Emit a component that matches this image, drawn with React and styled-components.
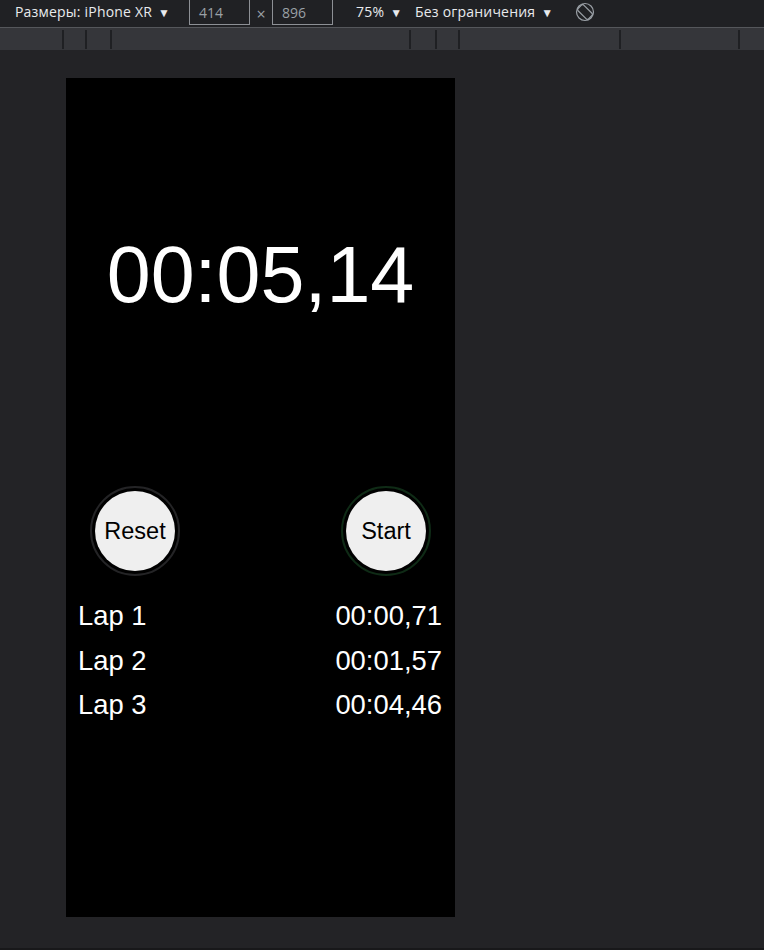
import { createGlobalStyle, styled } from "styled-components";

const GlobalStyle = createGlobalStyle`
  html, body {
    margin: 0;
    padding: 0;
    background: #232326;
  }
  body {
    font-family: "Liberation Sans", Arial, sans-serif;
  }
`;

const Page = styled.div`
  display: flex;
  flex-direction: column;
  width: 764px;
  height: 950px;
  overflow: hidden;
  background: #232326;
  border-bottom: 2px solid #18181a;
  box-sizing: border-box;
`;

const Toolbar = styled.div`
  display: flex;
  align-items: center;
  height: 28px;
  box-sizing: border-box;
  padding: 0 0 4px 15px;
  background: #202124;
  border-bottom: 1px solid #55575b;
  font-family: "Open Sans", "Noto Sans", sans-serif;
  font-size: 14px;
  color: #e8eaed;
`;

const Label = styled.span`
  flex: 0 0 ${(p) => p.$w}px;
  white-space: nowrap;
  letter-spacing: 0.2px;
`;

const Caret = styled.span`
  font-size: 12px;
  margin-left: 6px;
`;

const SizeInput = styled.div`
  flex: 0 0 61px;
  height: 25px;
  box-sizing: border-box;
  align-self: flex-start;
  border: 1px solid #8d9095;
  border-top: none;
  padding: 3px 0 0 9px;
  color: #9aa0a6;
  font-size: 14px;
`;

const Times = styled.span`
  flex: 0 0 22px;
  text-align: center;
  color: #9aa0a6;
  font-size: 16px;
  margin-top: 4px;
`;

const Spacer = styled.span`
  flex: 0 0 ${(p) => p.$w}px;
`;

const RotateIcon = () => (
  <svg width="20" height="20" viewBox="0 0 20 20">
    <circle cx="10" cy="10" r="8.5" fill="none" stroke="#9aa0a6" strokeWidth="1.2" />
    <rect
      x="6"
      y="2.6"
      width="8"
      height="14.8"
      rx="1.6"
      fill="none"
      stroke="#9aa0a6"
      strokeWidth="1.2"
      transform="rotate(-45 10 10)"
    />
  </svg>
);

const Ruler = styled.div`
  display: flex;
  height: 22px;
  box-sizing: border-box;
  padding: 2px 0 1px;
  background: #35363a;
`;

const RulerSeg = styled.div`
  flex: ${(p) => (p.$w ? `0 0 ${p.$w}px` : "1")};
  box-sizing: border-box;
  border-left: ${(p) => (p.$first ? "none" : "2px solid #1f2023")};
`;

const Stage = styled.div`
  flex: 1;
  padding: 28px 0 0 66px;
  background: #232326;
`;

const Screen = styled.div`
  display: flex;
  flex-direction: column;
  width: 389px;
  height: 839px;
  background: #000;
  color: #fff;
  font-family: "Liberation Sans", Arial, sans-serif;
`;

const Display = styled.div`
  margin-top: 152px;
  text-align: center;
  font-size: 79px;
  line-height: 90px;
`;

const Controls = styled.div`
  display: flex;
  justify-content: space-between;
  padding: 0 24px;
  margin-top: 166px;
`;

const Ring = styled.div`
  width: 90px;
  height: 90px;
  box-sizing: border-box;
  border-radius: 50%;
  border: 2px solid ${(p) => p.$ring};
  padding: 3px;
`;

const RoundButton = styled.button`
  width: 80px;
  height: 80px;
  border-radius: 50%;
  border: none;
  padding: 0;
  background: #efefef;
  color: #000;
  font-family: "Liberation Sans", Arial, sans-serif;
  font-size: 23.5px;
`;

const Laps = styled.div`
  margin-top: 18px;
  display: flex;
  flex-direction: column;
`;

const LapRow = styled.div`
  display: flex;
  justify-content: space-between;
  padding: 0 13px 0 12px;
  font-size: 27.4px;
  line-height: 44.5px;
`;

const rulerWidths = [62, 23, 25, 299, 26, 23, 161, 119, 0];

const laps = [
  { name: "Lap 1", time: "00:00,71" },
  { name: "Lap 2", time: "00:01,57" },
  { name: "Lap 3", time: "00:04,46" },
];

export default function App() {
  return (
    <>
      <GlobalStyle />
      <Page>
        <Toolbar>
          <Label $w={174}>
            Размеры: iPhone XR<Caret>▼</Caret>
          </Label>
          <SizeInput>414</SizeInput>
          <Times>×</Times>
          <SizeInput>896</SizeInput>
          <Spacer $w={23} />
          <Label $w={59}>
            75%<Caret>▼</Caret>
          </Label>
          <Label $w={160}>
            Без ограничения<Caret>▼</Caret>
          </Label>
          <RotateIcon />
        </Toolbar>
        <Ruler>
          {rulerWidths.map((w, i) => (
            <RulerSeg key={i} $w={w} $first={i === 0} />
          ))}
        </Ruler>
        <Stage>
          <Screen>
            <Display>00:05,14</Display>
            <Controls>
              <Ring $ring="#242426">
                <RoundButton>Reset</RoundButton>
              </Ring>
              <Ring $ring="#0f2b16">
                <RoundButton>Start</RoundButton>
              </Ring>
            </Controls>
            <Laps>
              {laps.map((lap) => (
                <LapRow key={lap.name}>
                  <span>{lap.name}</span>
                  <span>{lap.time}</span>
                </LapRow>
              ))}
            </Laps>
          </Screen>
        </Stage>
      </Page>
    </>
  );
}
